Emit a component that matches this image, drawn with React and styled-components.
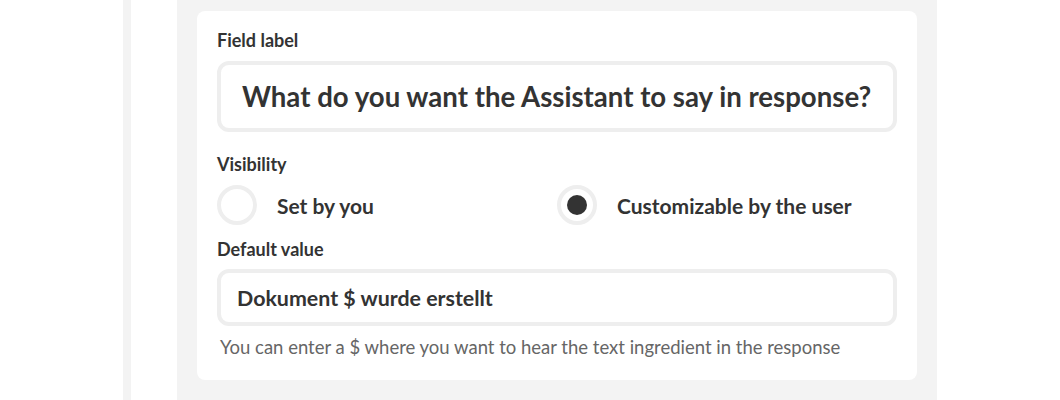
import React from 'react';
import styled, { createGlobalStyle } from 'styled-components';

const GlobalStyle = createGlobalStyle`
    html, body {
        margin: 0;
        padding: 0;
        background: #fff;
        font-family: Lato, "Open Sans", sans-serif;
        color: #333;
    }
`;

const Page = styled.div`
    display: flex;
    height: 400px;
    overflow: hidden;
`;

const Rail = styled.div`
    margin-left: 123px;
    width: 8px;
    background: #f3f3f3;
`;

const Gap = styled.div`
    width: 46px;
`;

const Panel = styled.div`
    width: 760px;
    background: #f3f3f3;
    padding: 11px 20px 0;
    box-sizing: border-box;
`;

const Card = styled.div`
    background: #fff;
    border-radius: 8px;
    padding: 17px 20px 22px;
    display: flex;
    flex-direction: column;
`;

const Label = styled.div`
    font-size: 18px;
    font-weight: 700;
    line-height: 24px;
    margin-bottom: ${(p) => p.$mb || 8}px;
`;

const Input = styled.div`
    border: 4px solid #eee;
    border-radius: 12px;
    padding: 0 ${(p) => (p.$big ? 21 : 16)}px;
    height: ${(p) => (p.$big ? 63 : 49)}px;
    display: flex;
    align-items: center;
    font-size: ${(p) => (p.$big ? 27.6 : 21.4)}px;
    font-weight: 700;
    white-space: nowrap;
    overflow: hidden;
`;

const Section = styled.div`
    margin-top: ${(p) => p.$mt || 0}px;
`;

const Options = styled.div`
    display: grid;
    grid-template-columns: 1fr 1fr;
    margin-top: 9px;
`;

const Option = styled.label`
    display: flex;
    align-items: center;
    gap: 20px;
    font-size: 21px;
    font-weight: 700;
`;

const Radio = styled.span`
    width: 32px;
    height: 32px;
    border: 4px solid #eee;
    border-radius: 50%;
    display: flex;
    align-items: center;
    justify-content: center;

    &::after {
        content: '';
        width: 20px;
        height: 20px;
        border-radius: 50%;
        background: ${(p) => (p.$checked ? '#333' : 'transparent')};
    }
`;

const Help = styled.div`
    margin: 10px 0 0 3px;
    font-size: 18.5px;
    color: #666;
`;

const App = () => {
    return (
        <Page>
            <GlobalStyle />
            <Rail />
            <Gap />
            <Panel>
                <Card>
                    <Label $mb={9}>Field label</Label>
                    <Input $big>What do you want the Assistant to say in response?</Input>

                    <Section $mt={20}>
                        <Label $mb={0}>Visibility</Label>
                        <Options>
                            <Option>
                                <Radio />
                                Set by you
                            </Option>
                            <Option>
                                <Radio $checked />
                                Customizable by the user
                            </Option>
                        </Options>
                    </Section>

                    <Section $mt={12}>
                        <Label>Default value</Label>
                        <Input>Dokument $ wurde erstellt</Input>
                        <Help>You can enter a $ where you want to hear the text ingredient in the response</Help>
                    </Section>
                </Card>
            </Panel>
        </Page>
    );
};

export default App;
